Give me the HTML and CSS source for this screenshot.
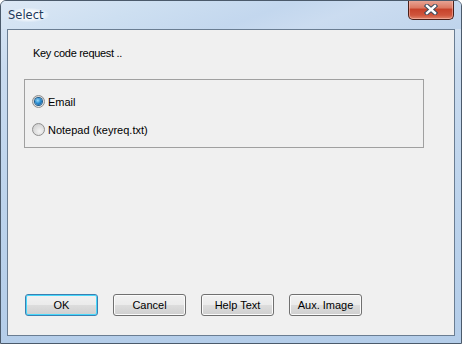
FILE: index.html
```html
<!DOCTYPE html>
<html lang="en">
<head>
    <meta charset="UTF-8">
    <title>Select</title>
    <link rel="stylesheet" href="styles.css">
</head>
<body>

    <div class="window">
        <div class="title-bar">
            <span class="title">Select</span>
            <button class="close-btn" type="button" aria-label="Close">
                <svg width="14" height="11" viewBox="0 0 14 11">
                    <path d="M3 2 L11 9 M11 2 L3 9" stroke="#3a4a5c" stroke-width="4.4" stroke-linecap="square" fill="none"/>
                    <path d="M3 2 L11 9 M11 2 L3 9" stroke="#ffffff" stroke-width="2.4" stroke-linecap="square" fill="none"/>
                </svg>
            </button>
        </div>

        <div class="client">
            <div class="prompt">Key code request ..</div>

            <div class="group-box">
                <label class="radio-row">
                    <span class="radio checked"></span>
                    <span>Email</span>
                </label>
                <label class="radio-row">
                    <span class="radio"></span>
                    <span>Notepad (keyreq.txt)</span>
                </label>
            </div>

            <div class="button-row">
                <button class="btn default" type="button">OK</button>
                <button class="btn" type="button">Cancel</button>
                <button class="btn" type="button">Help Text</button>
                <button class="btn" type="button">Aux. Image</button>
            </div>
        </div>
    </div>

</body>
</html>
```

FILE: styles.css
```css
body {
    margin: 0;
    padding: 0;
    background: #ffffff;
    font-family: 'Liberation Sans', Arial, sans-serif;
    font-size: 11px;
    color: #000;
}

.window {
    width: 462px;
    height: 344px;
    box-sizing: border-box;
    border: 1px solid #4b5a6b;
    border-radius: 6px 6px 0 0;
    background: linear-gradient(180deg, #d9e6f4 0%, #c9dbef 20%, #bcd3ec 60%, #b4cde9 100%);
    display: flex;
    flex-direction: column;
    overflow: hidden;
}

.title-bar {
    height: 28px;
    display: flex;
    justify-content: space-between;
    align-items: flex-start;
    padding: 0 7px 0 7px;
    background: linear-gradient(160deg, #dce8f5 0%, #cddff1 30%, #c3d7ee 55%, #cbdcf0 70%, #bfd4ec 100%);
}

.title {
    margin-top: 7px;
    font-family: 'DejaVu Sans', sans-serif;
    font-size: 11.5px;
    color: #1e395b;
    padding: 0 6px 0 0;
    border-radius: 8px;
    background: radial-gradient(ellipse at center, rgba(255,255,255,0.85) 40%, rgba(255,255,255,0) 75%);
}

.close-btn {
    width: 46px;
    height: 20px;
    margin: -1px 0 0 0;
    padding: 0;
    border: 1px solid #4a1f18;
    border-top: none;
    border-radius: 0 0 5px 5px;
    background: linear-gradient(180deg, #e9a99a 0%, #dc7a63 40%, #c7432b 50%, #d0553c 80%, #e0866b 100%);
    box-shadow: inset 0 0 0 1px rgba(255, 200, 190, 0.5);
    display: flex;
    align-items: center;
    justify-content: center;
}

.client {
    flex: 1;
    margin: 0 6px 7px 6px;
    border: 1px solid #6a7d92;
    background: #f0f0f0;
    display: flex;
    flex-direction: column;
    padding: 0 0 0 16px;
}

.prompt {
    margin: 17px 0 0 9px;
    line-height: 13px;
    letter-spacing: -0.3px;
}

.group-box {
    width: 400px;
    height: 69px;
    box-sizing: border-box;
    margin-top: 19px;
    border: 1px solid #a0a0a0;
    display: flex;
    flex-direction: column;
    padding: 15px 0 0 7px;
    gap: 15px;
}

.radio-row {
    display: flex;
    align-items: center;
    gap: 3px;
    height: 13px;
}

.radio {
    width: 11px;
    height: 11px;
    border-radius: 50%;
    border: 1px solid #8f8f8f;
    background: radial-gradient(circle at 60% 65%, #f4f4f4 0%, #dcdcdc 55%, #c8c8c8 100%);
    display: flex;
    align-items: center;
    justify-content: center;
}

.radio.checked::after {
    content: "";
    width: 7px;
    height: 7px;
    border-radius: 50%;
    background: radial-gradient(circle at 40% 35%, #9bdcfb 0%, #2a8fd4 45%, #0e4c86 100%);
    box-shadow: 0 0 0 1px #1d5b8c;
}

.button-row {
    margin-top: auto;
    margin-bottom: 19px;
    display: flex;
    gap: 15px;
    padding-left: 1px;
}

.btn {
    width: 73px;
    height: 22px;
    padding: 0;
    border: 1px solid #707070;
    border-radius: 3px;
    background: linear-gradient(180deg, #f2f2f2 0%, #ebebeb 48%, #dddddd 50%, #cfcfcf 100%);
    box-shadow: inset 0 0 0 1px #fbfbfb;
    font-family: 'Liberation Sans', Arial, sans-serif;
    font-size: 11px;
    color: #000;
}

.btn.default {
    border-color: #3c7fb1;
    box-shadow: inset 0 0 0 1px #48d8fb;
}
```
